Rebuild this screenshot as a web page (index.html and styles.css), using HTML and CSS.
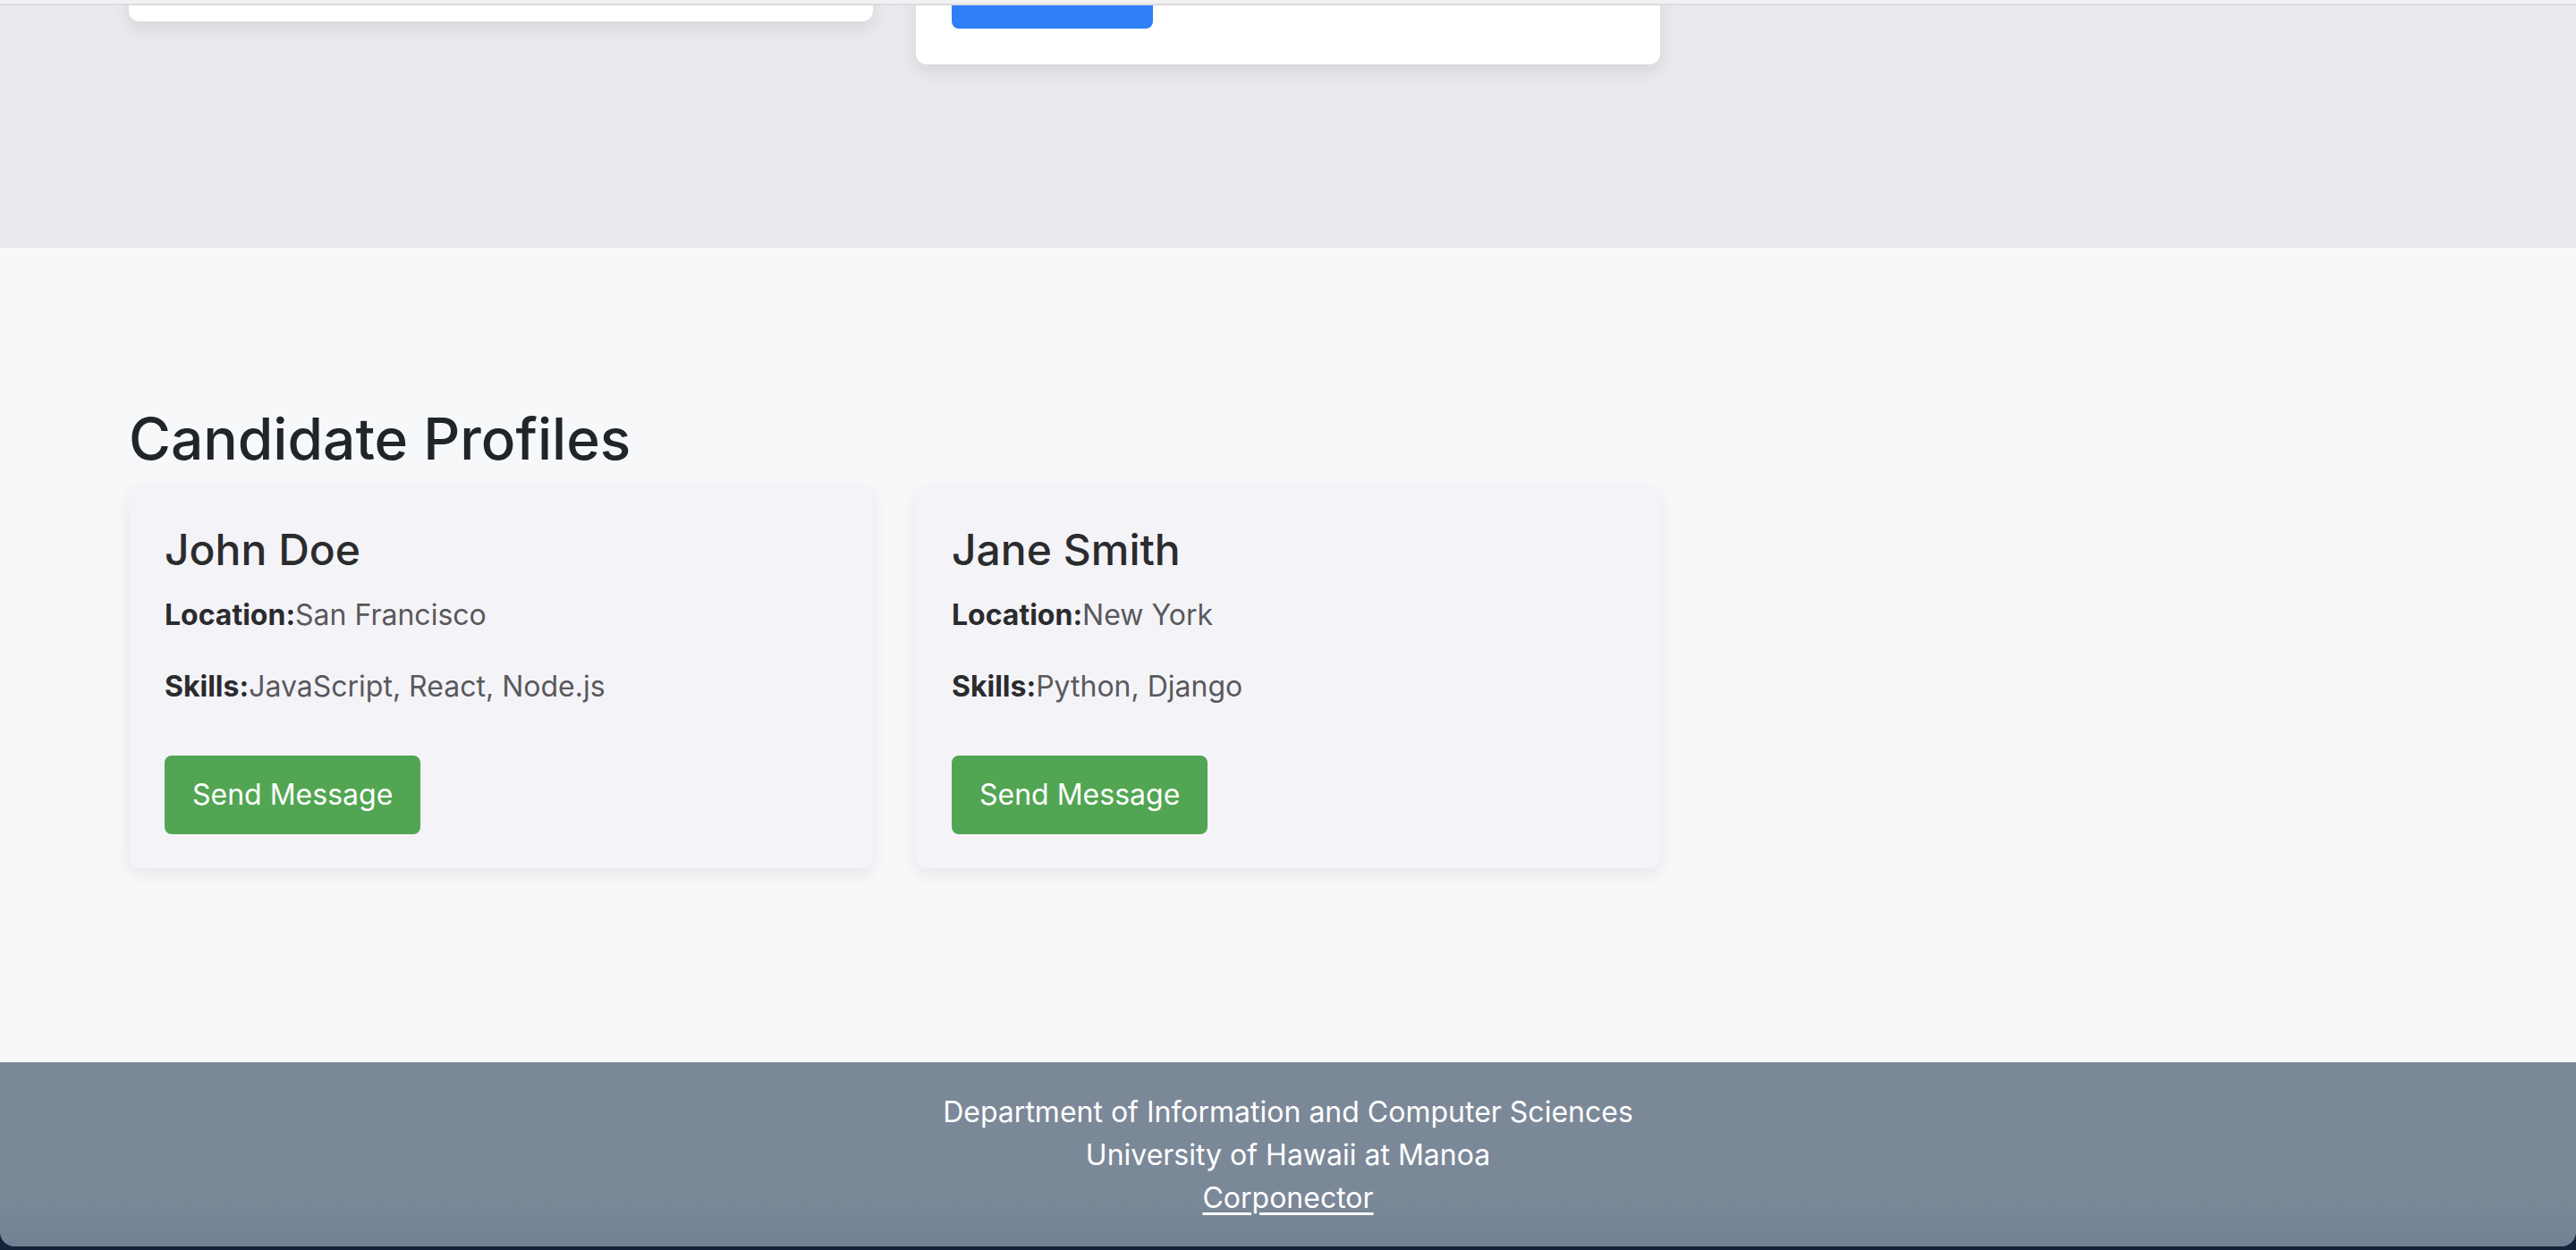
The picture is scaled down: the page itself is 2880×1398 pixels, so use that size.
FILE: index.html
```html
<!DOCTYPE html>
<html lang="en">
<head>
<meta charset="utf-8">
<title>Corponector</title>
<link rel="stylesheet" href="styles.css">
</head>
<body>
<div class="topbar"></div>
<section class="jobs-section">
  <div class="grid jobs">
    <div class="job-card job-card-short"></div>
    <div class="job-card job-card-tall">
      <div class="apply-btn"></div>
    </div>
  </div>
</section>
<section class="profiles-section">
  <h2 class="section-title">Candidate Profiles</h2>
  <div class="grid">
    <div class="profile-card">
      <h3 class="profile-name">John Doe</h3>
      <p class="profile-line"><strong>Location:</strong>San Francisco</p>
      <p class="profile-line"><strong>Skills:</strong>JavaScript, React, Node.js</p>
      <button class="msg-btn">Send Message</button>
    </div>
    <div class="profile-card">
      <h3 class="profile-name">Jane Smith</h3>
      <p class="profile-line"><strong>Location:</strong>New York</p>
      <p class="profile-line"><strong>Skills:</strong>Python, Django</p>
      <button class="msg-btn">Send Message</button>
    </div>
  </div>
</section>
<footer class="footer">
  <div class="footer-line">Department of Information and Computer Sciences</div>
  <div class="footer-line">University of Hawaii at Manoa</div>
  <div class="footer-line"><a class="footer-link" href="#">Corponector</a></div>
</footer>
</body>
</html>
```
FILE: styles.css
```css
* { box-sizing: border-box; }
html, body { margin: 0; padding: 0; }
body {
  font-family: Inter, "Noto Sans", "Liberation Sans", sans-serif;
  background: #14223a;
  color: #222;
  width: 2880px;
  height: 1398px;
  overflow: hidden;
}
.topbar {
  height: 6px;
  background: #f1f1f3;
  border-bottom: 2px solid #dcdcdf;
}
.jobs-section {
  background: #e9eaee;
  padding: 0 144px 205px;
  overflow: hidden;
}
.grid {
  display: grid;
  grid-template-columns: repeat(3, 1fr);
  gap: 48px;
  align-items: start;
}
.jobs { margin-top: -200px; }
.job-card {
  background: #fff;
  border-radius: 12px;
  box-shadow: 0 8px 20px rgba(0, 0, 0, 0.09);
}
.job-card-short { height: 218px; }
.job-card-tall {
  height: 266px;
  padding: 40px;
  display: flex;
  flex-direction: column;
  justify-content: flex-end;
}
.apply-btn {
  width: 225px;
  height: 88px;
  background: #2f7ff6;
  border-radius: 8px;
}
.profiles-section {
  background: #f7f8fa;
  padding: 175px 144px 217px;
}
.section-title {
  margin: 0 0 15px;
  font-size: 64px;
  line-height: 77px;
  font-weight: 500;
  color: #212529;
}
.profile-card {
  background: #f4f4f8;
  border-radius: 12px;
  padding: 42px 40px 38px;
  box-shadow: 0 6px 18px rgba(0, 0, 0, 0.08);
}
.profile-name {
  margin: 0 0 20px;
  font-size: 48px;
  line-height: 58px;
  font-weight: 500;
  color: #2b2b2e;
}
.profile-line {
  margin: 0 0 32px;
  font-size: 32px;
  line-height: 48px;
  color: #59595c;
}
.profile-line strong {
  color: #2b2b2e;
  font-weight: 700;
}
.msg-btn {
  display: block;
  margin-top: 53px;
  border: none;
  border-radius: 8px;
  background: #52a552;
  color: #fff;
  font-family: inherit;
  font-size: 32px;
  line-height: 48px;
  padding: 20px 31px;
}
.footer {
  background: linear-gradient(to bottom, #7b8898 0%, #7b8898 75%, #738091 100%);
  color: #fff;
  text-align: center;
  padding: 32px 0 30px;
  border-radius: 0 0 16px 16px;
}
.footer-line {
  font-size: 32px;
  line-height: 48px;
}
.footer-link {
  color: #fff;
  text-decoration: underline;
  text-underline-offset: 5px;
  text-decoration-thickness: 3px;
}
```
